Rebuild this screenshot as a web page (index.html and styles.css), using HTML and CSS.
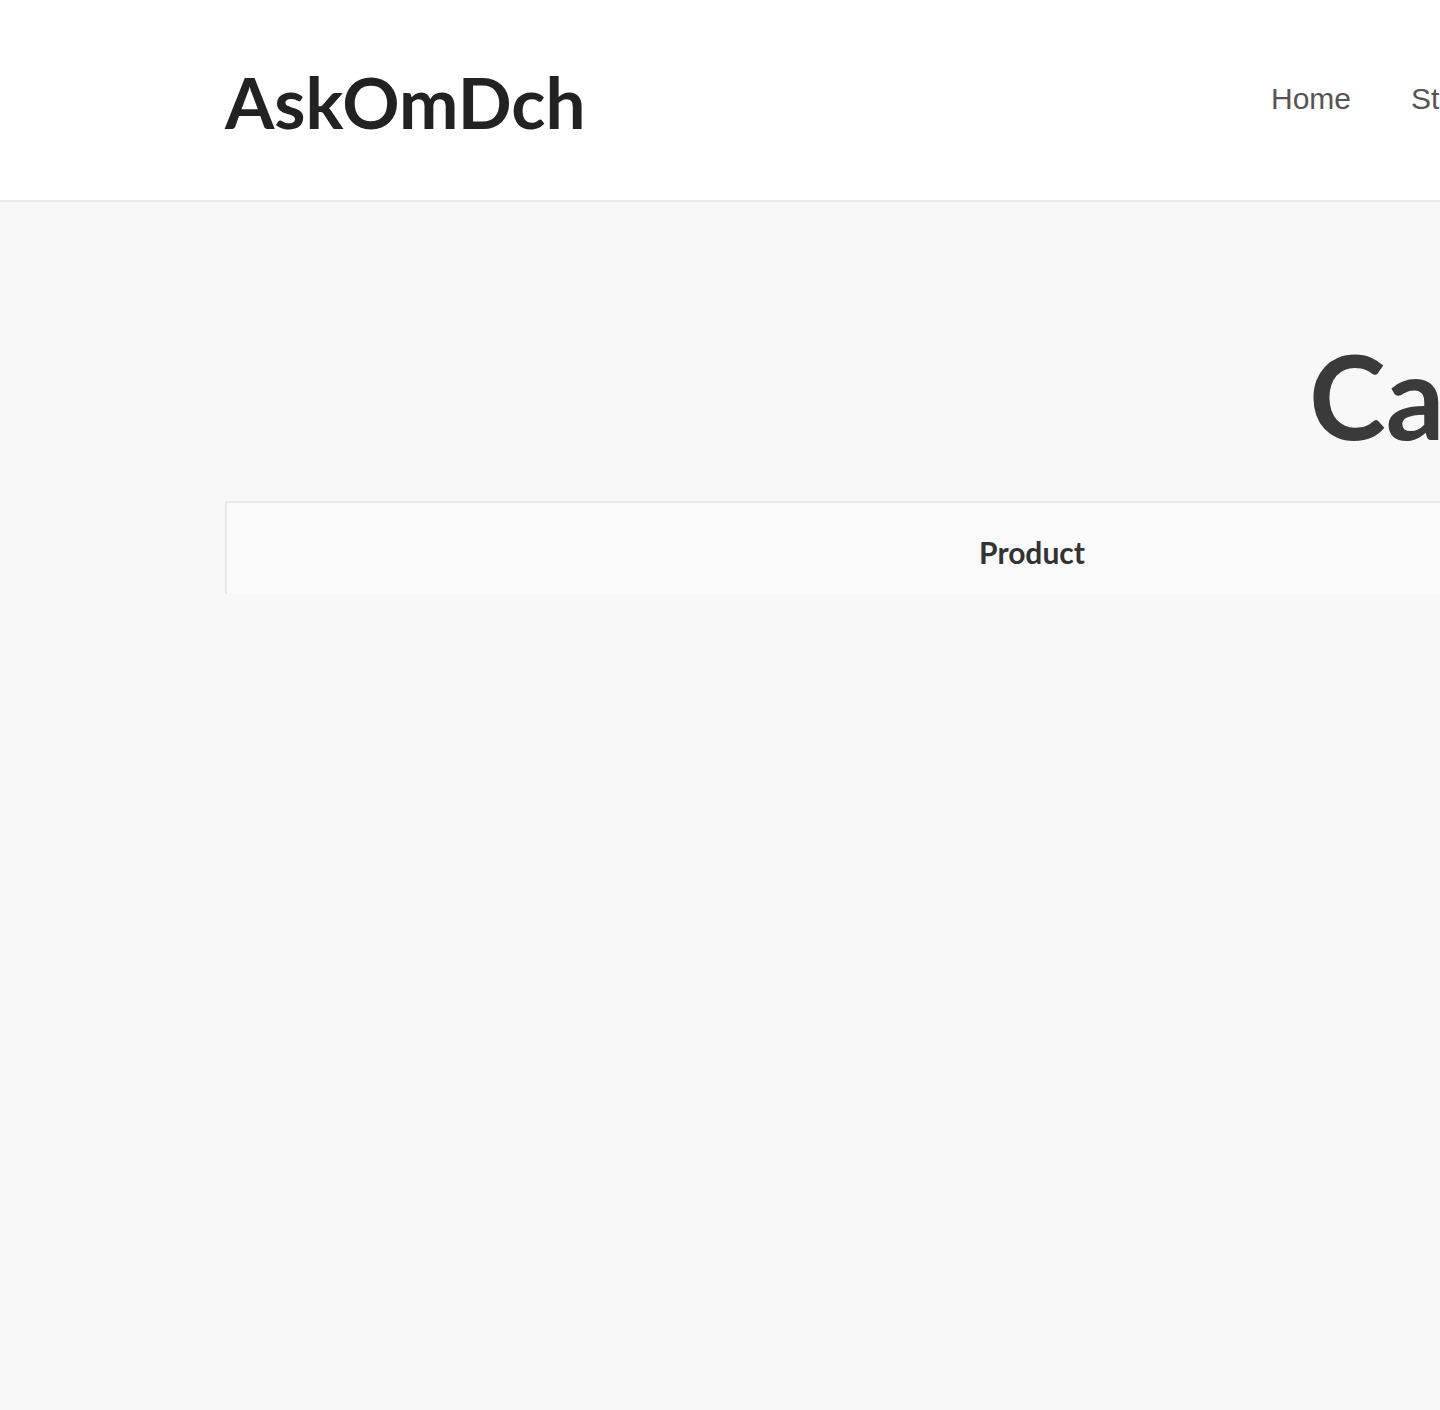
FILE: index.html
```html
<!DOCTYPE html>
<html lang="en">
<head>
<meta charset="utf-8">
<title>Cart – AskOmDch</title>
<link rel="stylesheet" href="styles.css">
</head>
<body>
<div class="page">
  <header class="site-header">
    <div class="header-inner">
      <div class="brand"><a class="logo" href="#">AskOmDch</a></div>
      <nav class="main-nav">
        <ul class="nav-list">
          <li><a href="#">Home</a></li>
          <li><a href="#">Store</a></li>
          <li><a href="#">Men</a></li>
          <li><a href="#">Women</a></li>
          <li><a href="#">Accessories</a></li>
          <li><a href="#">Account</a></li>
        </ul>
      </nav>
    </div>
  </header>
  <main class="content">
    <div class="container">
      <h1 class="page-title">Cart</h1>
      <div class="cart-box">
        <table class="cart-table">
          <thead>
            <tr>
              <th class="col-product">Product</th>
              <th class="col-price">Price</th>
              <th class="col-qty">Quantity</th>
              <th class="col-sub">Subtotal</th>
            </tr>
          </thead>
        </table>
      </div>
    </div>
  </main>
</div>
</body>
</html>
```
FILE: styles.css
```css
html, body {
  margin: 0;
  padding: 0;
  overflow: hidden;
  background: #f8f8f8;
}
body {
  font-family: Lato, "Liberation Sans", sans-serif;
  color: #333;
}
.page {
  width: 2850px;
  min-height: 1410px;
  background: #f8f8f8;
}
.site-header {
  background: #ffffff;
  height: 202px;
  border-bottom: 2px solid #e9e9e9;
  box-sizing: border-box;
}
.header-inner {
  height: 100%;
  margin: 0 225px;
  display: flex;
  align-items: center;
}
.brand {
  flex: 0 0 1046px;
  padding-top: 2px;
}
.logo {
  font-family: Lato, sans-serif;
  font-weight: 700;
  font-size: 71px;
  color: #222;
  text-decoration: none;
}
.nav-list {
  list-style: none;
  margin: 0;
  padding: 0 0 2px;
  display: flex;
  gap: 60px;
}
.nav-list a {
  font-family: "Liberation Sans", Arial, sans-serif;
  font-size: 30px;
  color: #555;
  text-decoration: none;
}
.content {
  padding-top: 124px;
}
.container {
  margin: 0 225px;
  width: 2390px;
}
.page-title {
  margin: 0 0 36px;
  text-align: center;
  font-family: Lato, sans-serif;
  font-weight: 700;
  font-size: 116px;
  line-height: 1.2;
  color: #3a3a3a;
}
.cart-box {
  background: #fafafa;
  border-top: 2px solid #e8e8e8;
  border-left: 2px solid #e8e8e8;
  height: 93px;
  overflow: hidden;
  box-sizing: border-box;
}
.cart-table {
  width: 100%;
  border-collapse: collapse;
}
.cart-table th {
  font-family: Lato, sans-serif;
  font-weight: 700;
  font-size: 30px;
  line-height: 36px;
  color: #333;
  padding: 31px 0 0;
  vertical-align: top;
  text-align: center;
}
.col-product { width: 1610px; }
```
